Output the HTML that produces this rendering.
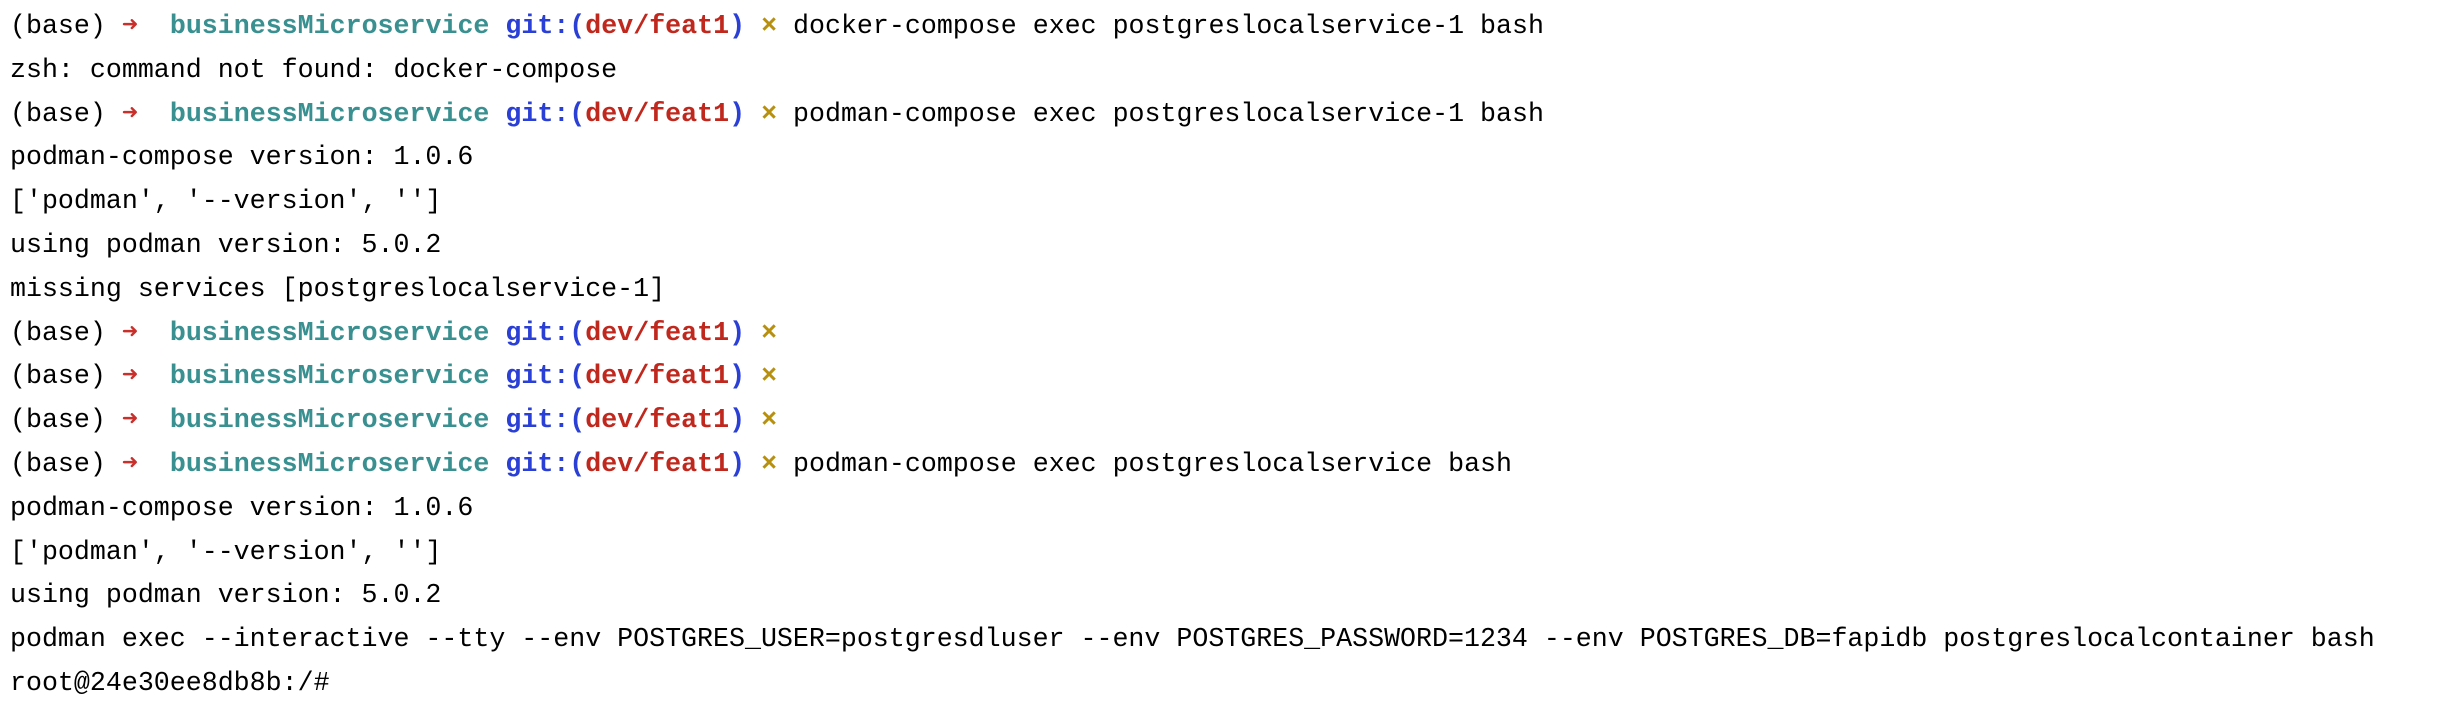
<!DOCTYPE html>
<html><head><meta charset="utf-8"><style>
html,body{margin:0;padding:0;background:#fff;width:2438px;height:710px;overflow:hidden}
.t{position:absolute;left:10px;top:5px;font-family:"Liberation Mono",monospace;font-size:26.63px;line-height:43.8px;color:#000;white-space:pre}
.c{color:#3a9090;font-weight:bold}
.b{color:#2a3fd6;font-weight:bold}
.r{color:#c0281e;font-weight:bold}
.a{color:#c9302c;font-weight:bold}
.x{color:#b8900f;font-weight:bold}
</style></head><body><div class="t">(base) <span class="a">➜</span>  <span class="c">businessMicroservice</span> <span class="b">git:(</span><span class="r">dev/feat1</span><span class="b">)</span> <span class="x">×</span> docker-compose exec postgreslocalservice-1 bash
zsh: command not found: docker-compose
(base) <span class="a">➜</span>  <span class="c">businessMicroservice</span> <span class="b">git:(</span><span class="r">dev/feat1</span><span class="b">)</span> <span class="x">×</span> podman-compose exec postgreslocalservice-1 bash
podman-compose version: 1.0.6
['podman', '--version', '']
using podman version: 5.0.2
missing services [postgreslocalservice-1]
(base) <span class="a">➜</span>  <span class="c">businessMicroservice</span> <span class="b">git:(</span><span class="r">dev/feat1</span><span class="b">)</span> <span class="x">×</span>
(base) <span class="a">➜</span>  <span class="c">businessMicroservice</span> <span class="b">git:(</span><span class="r">dev/feat1</span><span class="b">)</span> <span class="x">×</span>
(base) <span class="a">➜</span>  <span class="c">businessMicroservice</span> <span class="b">git:(</span><span class="r">dev/feat1</span><span class="b">)</span> <span class="x">×</span>
(base) <span class="a">➜</span>  <span class="c">businessMicroservice</span> <span class="b">git:(</span><span class="r">dev/feat1</span><span class="b">)</span> <span class="x">×</span> podman-compose exec postgreslocalservice bash
podman-compose version: 1.0.6
['podman', '--version', '']
using podman version: 5.0.2
podman exec --interactive --tty --env POSTGRES_USER=postgresdluser --env POSTGRES_PASSWORD=1234 --env POSTGRES_DB=fapidb postgreslocalcontainer bash
root@24e30ee8db8b:/#</div></body></html>
